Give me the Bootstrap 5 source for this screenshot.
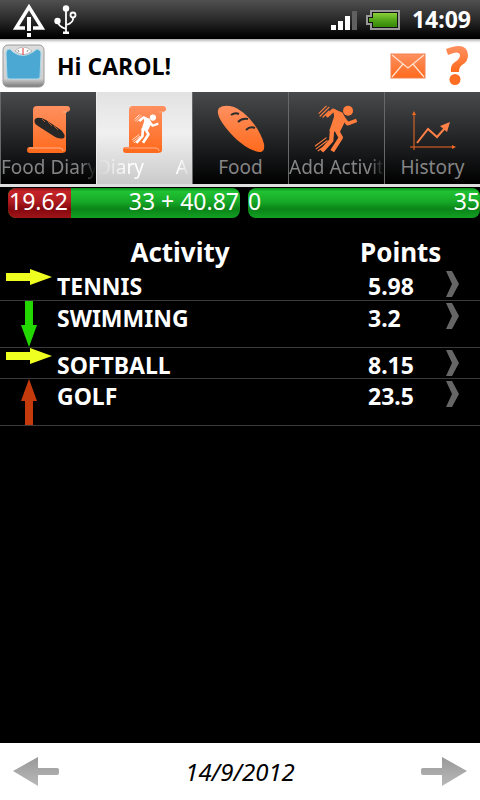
<!DOCTYPE html>
<html lang="en">
<head>
<meta charset="utf-8">
<meta name="viewport" content="width=device-width, initial-scale=1">
<title>Activity Diary</title>
<link href="https://cdn.jsdelivr.net/npm/bootstrap@5.3.0/dist/css/bootstrap.min.css" rel="stylesheet">
<style>
body { font-family: "Noto Sans", "Open Sans", sans-serif; background: #000; color: #fff; }
svg { display: block; flex: none; }
.status-bar { height: 39px; background: linear-gradient(#505050, #2a2a2a 50%, #000 95%); padding: 0 9px 0 13px; }
.clock { font-size: 23px; font-weight: 700; line-height: 39px; }
.app-head { height: 53px; background: linear-gradient(#aaa, #f4f4f4 3px, #fff 5px); color: #000; padding: 0 12px 0 2px; }
.greeting { font-family: "Open Sans", "Noto Sans", sans-serif; font-size: 23px; font-weight: 700; line-height: 30px; }
.plain-btn { background: none; border: 0; padding: 0; }
.tab-strip { border-bottom: 3px solid #dedede; }
.tab-link { flex: 1 1 0; min-width: 0; height: 92px; padding-top: 13px; background: linear-gradient(#484a4c, #1c1d1f 60%, #000); border-left: 1px solid #66686a; color: #858585; text-decoration: none; font-size: 19px; line-height: 28px; }
.tab-link svg { margin: 0 auto; }
.tab-link.current { background: linear-gradient(#e2e2e2, #f0f0f0 45%, #cacaca); color: #fff; border-color: #eee; }
.tab-text { white-space: nowrap; overflow: hidden; }
.fade-end { -webkit-mask-image: linear-gradient(90deg, #000 85%, transparent); mask-image: linear-gradient(90deg, #000 85%, transparent); }
.fade-both { -webkit-mask-image: linear-gradient(90deg, transparent, #000 35%, #000 85%, transparent); mask-image: linear-gradient(90deg, transparent, #000 35%, #000 85%, transparent); }
.scroll-text { justify-content: space-between; padding-right: 4px; }
.meters { padding: 1px 0 0 8px; gap: 8px; }
.meter { flex: 1 1 0; height: 30px; border-radius: 8px; overflow: hidden; background: linear-gradient(#0c8f1c, #20c232 12%, #17aa28 45%, #0b8418 70%, #12a022); font-size: 23px; line-height: 26px; }
.meter-used { background: linear-gradient(#8f1515, #c52328 12%, #ae1c20 45%, #84090f 70%, #a01418); width: 27%; padding-left: 1px; white-space: nowrap; }
.meter-end { padding-right: 1px; }
.log { width: 100%; margin-top: 17px; table-layout: fixed; font-size: 23px; font-weight: 700; }
.log th { font-size: 26px; line-height: 34px; padding: 0; }
.log td { padding: 0; vertical-align: top; border-bottom: 1px solid #3a3a3a; height: 31px; }
.log td.arrow-cell { padding-left: 6px; }
.log td.name-cell, .log td.points-cell { padding-top: 5px; line-height: 25px; }
.log td.points-cell { padding-left: 8px; }
.log .vertical { margin-left: 15px; }
.w-arrow { width: 57px; } .w-points { width: 86px; } .w-go { width: 34px; }
.log .go { display: block; margin-top: 2px; }
.date-bar { height: 57px; background: #fff; color: #000; padding: 0 13px; }
.date-text { font-size: 24px; font-style: italic; line-height: 30px; }
</style>
<script src="https://cdn.jsdelivr.net/npm/bootstrap@5.3.0/dist/js/bootstrap.bundle.min.js"></script>
</head>
<body class="d-flex flex-column min-vh-100">
<svg width="0" height="0" class="position-absolute" aria-hidden="true">
  <defs>
    <linearGradient id="orange" x1="0" y1="0" x2="0" y2="1"><stop offset="0" stop-color="#ff9060"/><stop offset="1" stop-color="#ff6a1c"/></linearGradient>
    <linearGradient id="steel" x1="0" y1="0" x2="0" y2="1"><stop offset="0" stop-color="#999"/><stop offset="1" stop-color="#b8b8b8"/></linearGradient>
    <linearGradient id="frame" x1="0" y1="0" x2="0" y2="1"><stop offset="0" stop-color="#ddd"/><stop offset=".8" stop-color="#d0d0d0"/><stop offset="1" stop-color="#777"/></linearGradient>
    <linearGradient id="cell" x1="0" y1="0" x2="0" y2="1"><stop offset="0" stop-color="#8bd03a"/><stop offset=".5" stop-color="#55a61a"/><stop offset="1" stop-color="#358708"/></linearGradient>
    <symbol id="scroll" viewBox="0 0 44 48">
      <path d="M10 1H40Q43 1 43 4V5Q42 7 39 7V46Q38 48 35 48H3Q0 48 0 45Q0 42 3 42H6V5Q6 1 10 1Z" fill="url(#orange)"/>
      <path d="M2 43H33Q36 43 36 46M36 7H40" fill="none" stroke="#ffb08a" stroke-width="1"/>
    </symbol>
    <symbol id="loaf" viewBox="0 0 48 48">
      <path d="M2 3Q7-1 17 2C31 8 44 26 47 39Q48 46 44 47C34 47 20 37 9 23C2 14-1 7 2 3Z"/>
    </symbol>
    <symbol id="runner" viewBox="0 0 46 50">
      <circle cx="34.500" cy="6" r="5.200" fill="currentColor" stroke="none"/>
      <path d="M12 12L19 5.500L27 10L34 19.500L43.500 16" fill="none" stroke-width="3.800" stroke-linejoin="round"/>
      <path d="M19 4L29 8L32 16L26 28L15 27L20 12Z" fill="currentColor" stroke="none"/>
      <path d="M18 24L17 37L7 48M22 25L27 34L18 48" fill="none" stroke-width="4.500" stroke-linejoin="round"/>
      <path d="M4 9L12 1M5 12L15 2M8 13L15 6M0 43L12 34M1 46L13 37M3 48L10 43" fill="none" stroke-width="1.200"/>
    </symbol>
    <symbol id="chevron" viewBox="0 0 14 26"><path d="M0 0H6L13 13L6 26H0L6 13Z" fill="#666"/></symbol>
    <symbol id="arrow" viewBox="0 0 46 16"><path d="M0 4H24V0L46 8L24 16V12H0Z"/></symbol>
  </defs>
</svg>

<header>
  <div class="status-bar d-flex align-items-center">
    <svg width="33" height="34" viewBox="0 0 33 34" aria-label="Warning"><path d="M12 25H3L16 4L29 25H20" fill="none" stroke="#fff" stroke-width="3.500"/><path d="M14 14H18V28H14ZM14 30H18V34H14Z" fill="#fff"/></svg>
    <svg class="ms-2" width="24" height="30" viewBox="0 0 24 30" aria-label="USB"><g fill="none" stroke="#fff" stroke-width="1.800"><path d="M12 4V28M4 17Q4 21 12 24M19 12Q20 18 12 20"/><circle cx="19" cy="10" r="2.500"/></g><circle cx="12" cy="3.500" r="3.200" fill="#fff"/><circle cx="3.500" cy="16" r="3.200" fill="#fff"/><path d="M9 26.500H15V29H9Z" fill="#fff"/></svg>
    <svg class="ms-auto" width="26" height="20" viewBox="0 0 26 20" aria-label="Signal"><path d="M0 15H5V20H0ZM7 11H12V20H7ZM14 6H19V20H14Z" fill="#fff"/><path d="M21 1H26V20H21Z" fill="#606060"/></svg>
    <svg class="mx-2" width="35" height="20" viewBox="0 0 35 20" aria-label="Battery"><path d="M6 1H34V19H6V14H2V6H6Z" fill="#111" stroke="#999" stroke-width="2"/><path d="M8 3H32V17H8V12H4V8H8Z" fill="url(#cell)"/></svg>
    <span class="clock ms-1">14:09</span>
  </div>
  <div class="app-head d-flex align-items-center">
    <svg width="43" height="44" viewBox="0 0 43 44" aria-label="Scale"><rect x="1" y="1" width="41" height="42" rx="5" fill="url(#frame)" stroke="#999"/><path d="M8 5L11 8Q21 15 31 8L35 5Q39 6 39 9L38 33Q38 35 35 35H8Q5 35 5 33L4 9Q4 5 8 5Z" fill="#4aa8d2" stroke="#aed8e8"/><path d="M13 7Q21-1 30 7Q22 14 13 7Z" fill="#fff" stroke="#aaa" stroke-width=".8"/><path d="M21 4V11" stroke="#d33"/><path d="M16 6L17 8M26 6L25 8" stroke="#888"/></svg>
    <h1 class="greeting mb-0 ms-2 ps-1">Hi CAROL!</h1>
    <button class="plain-btn ms-auto" aria-label="Messages"><svg width="36" height="26" viewBox="0 0 36 26"><rect x="1" y="1" width="34" height="24" fill="url(#orange)" stroke="#f08455"/><path d="M2 2L18 15L34 2M2 24L13 11M34 24L23 11" fill="none" stroke="#ffe2d0" stroke-width="1.200"/></svg></button>
    <button class="plain-btn ms-3 ps-1" aria-label="Help"><svg width="22" height="40" viewBox="0 0 22 40"><path d="M0 3Q21-5 22 9Q22 16 16 19Q13 21 13 26H5Q4 19 9 16Q14 13 14 9Q13 4 2 9Z" fill="url(#orange)"/><circle cx="9" cy="33.500" r="5.500" fill="#ff6d23"/></svg></button>
  </div>
</header>

<nav class="tab-strip d-flex">
  <a class="tab-link" href="#food-diary"><svg width="44" height="48"><use href="#scroll"/><path d="M8 14Q12 11 19 15L34 25Q39 30 37 33Q32 35 25 30L11 21Q6 18 8 14Z" fill="#272727"/><path d="M15 14L18 17M21 17L25 21M27 21L31 25" stroke="#b05a2c" stroke-width="1"/></svg><div class="tab-text fade-end">Food Diary</div></a>
  <a class="tab-link current" href="#activity-diary" aria-current="page" aria-label="Activity Diary"><svg width="44" height="48"><use href="#scroll"/><g color="#fff" stroke="#fff"><use href="#runner" x="9" y="9" width="28" height="30"/></g></svg><div class="tab-text scroll-text fade-both d-flex"><span>Diary</span><span>A</span></div></a>
  <a class="tab-link" href="#food"><svg width="48" height="48"><use href="#loaf" width="48" height="48" fill="url(#orange)"/><path d="M14 10Q18 7 22 9M21 17Q25 13 31 14M29 25Q33 21 38 23" fill="none" stroke="#2c2d2e" stroke-width="2"/></svg><div class="tab-text text-center">Food</div></a>
  <a class="tab-link" href="#add-activity"><svg width="48" height="48" color="#ff7d3d" stroke="#ff7d3d"><use href="#runner" width="48" height="48"/></svg><div class="tab-text fade-end">Add Activity</div></a>
  <a class="tab-link" href="#history"><svg width="48" height="48" fill="none" stroke="#f26a22"><path d="M5 8V45M1 42H45"/><path d="M8 38L19 24L28 32L36 23" stroke="#ff8147" stroke-width="2"/><path d="M31 21L41 17L38 27Z" fill="#ff8147" stroke="none"/><path d="M5 6L7 10H3ZM47 42L43 40V44Z" fill="#f26a22" stroke="none"/></svg><div class="tab-text text-center">History</div></a>
</nav>

<main class="flex-grow-1">
  <div class="meters d-flex">
    <div class="meter d-flex"><div class="meter-used h-100">19.62</div><div class="meter-end ms-auto">33 + 40.87</div></div>
    <div class="meter d-flex justify-content-between"><span>0</span><span>35</span></div>
  </div>
  <table class="log">
    <colgroup><col class="w-arrow"><col><col class="w-points"><col class="w-go"></colgroup>
    <thead><tr><th class="text-center" colspan="2">Activity</th><th colspan="2">Points</th></tr></thead>
    <tbody>
      <tr><td class="arrow-cell"><svg width="46" height="16" fill="#efff20"><use href="#arrow"/></svg></td><td class="name-cell">TENNIS</td><td class="points-cell">5.98</td><td><button class="plain-btn go" aria-label="Open Tennis"><svg width="14" height="26"><use href="#chevron"/></svg></button></td></tr>
      <tr><td class="arrow-cell"><svg class="vertical" width="16" height="46" viewBox="0 0 16 46"><path d="M4 0H12V24H16L8 46L0 24H4Z" fill="#22d800"/></svg></td><td class="name-cell">SWIMMING</td><td class="points-cell">3.2</td><td><button class="plain-btn go" aria-label="Open Swimming"><svg width="14" height="26"><use href="#chevron"/></svg></button></td></tr>
      <tr><td class="arrow-cell"><svg width="46" height="16" fill="#efff20"><use href="#arrow"/></svg></td><td class="name-cell">SOFTBALL</td><td class="points-cell">8.15</td><td><button class="plain-btn go" aria-label="Open Softball"><svg width="14" height="26"><use href="#chevron"/></svg></button></td></tr>
      <tr><td class="arrow-cell"><svg class="vertical" width="16" height="46" viewBox="0 0 16 46"><path d="M8 0L16 22H12V46H4V22H0Z" fill="#c43a0c"/></svg></td><td class="name-cell">GOLF</td><td class="points-cell">23.5</td><td><button class="plain-btn go" aria-label="Open Golf"><svg width="14" height="26"><use href="#chevron"/></svg></button></td></tr>
    </tbody>
  </table>
</main>

<footer class="date-bar d-flex align-items-center justify-content-between">
  <button class="plain-btn" aria-label="Previous day"><svg width="46" height="29" viewBox="0 0 46 29"><path d="M0 14L25 0V11H44Q46 11 46 13V16Q46 18 44 18H25V29Z" fill="url(#steel)"/></svg></button>
  <span class="date-text">14/9/2012</span>
  <button class="plain-btn" aria-label="Next day"><svg width="46" height="29" viewBox="0 0 46 29"><path d="M46 14L21 0V11H2Q0 11 0 13V16Q0 18 2 18H21V29Z" fill="url(#steel)"/></svg></button>
</footer>
</body>
</html>
